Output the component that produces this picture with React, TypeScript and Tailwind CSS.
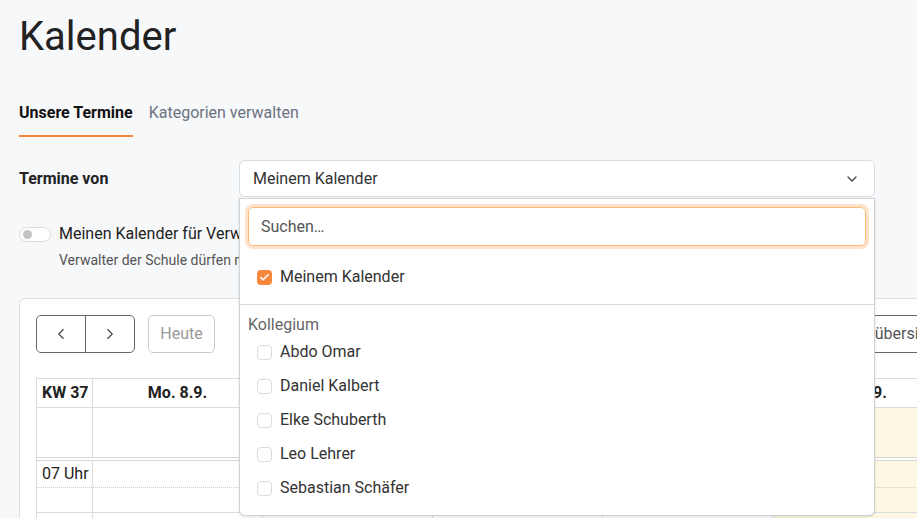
import React from "react";
import { ChevronDown, ChevronLeft, ChevronRight, Check } from "lucide-react";

const colleagues = [
  "Abdo Omar",
  "Daniel Kalbert",
  "Elke Schuberth",
  "Leo Lehrer",
  "Sebastian Schäfer",
];

const days = ["Mo. 8.9.", "Di. 9.9.", "Mi. 10.9.", "Do. 11.9.", "Fr. 12.9."];

const CalendarSelect: React.FC = () => {
  return (
    <div className="relative flex-1">
      <div className="h-[37px] flex items-center justify-between pl-[13px] pr-[14px] bg-white border border-[#d9dce0] rounded-md text-[16px] text-[#333]">
        <span>Meinem Kalender</span>
        <ChevronDown size={16} strokeWidth={2} className="text-[#444]" />
      </div>

      {/* open dropdown */}
      <div className="absolute left-0 right-0 top-[38px] z-10 bg-white border border-[#cfd2d6] rounded-b-md shadow-sm">
        <div className="px-[8px] pt-[8px]">
          <div className="h-[39px] flex items-center px-[12px] border border-[#fdba74] rounded-[5px] ring-[3px] ring-[#fde3cc] text-[16px] text-[#555]">
            Suchen…
          </div>
        </div>

        <div className="pt-[14px] pb-[10px]">
          <div className="h-[34px] flex items-center pl-[17px] gap-[8px]">
            <span className="w-[15px] h-[15px] rounded-[4px] bg-[#f7873b] flex items-center justify-center">
              <Check size={11} strokeWidth={3.5} className="text-white" />
            </span>
            <span className="text-[16px] text-[#333]">Meinem Kalender</span>
          </div>
        </div>

        <div className="border-t border-[#d6d8db] pt-[10px] pb-[10px]">
          <div className="h-[20px] flex items-center pl-[8px] text-[16px] text-[#666]">
            Kollegium
          </div>
          {colleagues.map((name) => (
            <div key={name} className="h-[34px] flex items-center pl-[17px] gap-[8px]">
              <span className="w-[15px] h-[15px] rounded-[4px] border border-[#d9dbde] bg-white" />
              <span className="text-[16px] text-[#333]">{name}</span>
            </div>
          ))}
        </div>
      </div>
    </div>
  );
};

const CalendarCard: React.FC = () => {
  return (
    <div className="mt-[29px] w-[952px] bg-white border border-[#dcdee2] rounded-md px-[16px] pt-[16px]">
      <div className="flex items-center">
        <div className="flex h-[38px] border border-[#666] rounded-[5px]">
          <button className="w-[49px] flex items-center justify-center border-r border-[#666] text-[#444]">
            <ChevronLeft size={18} strokeWidth={1.5} />
          </button>
          <button className="w-[48px] flex items-center justify-center text-[#444]">
            <ChevronRight size={18} strokeWidth={1.5} />
          </button>
        </div>
        <button className="ml-[13px] h-[38px] w-[67px] border border-[#c8cacd] rounded-[5px] text-[16px] text-[#9a9a9a]">
          Heute
        </button>
        <button className="ml-auto h-[38px] px-[12px] border border-[#666] rounded-[5px] text-[16px] text-[#555]">
          Monatsübersicht
        </button>
      </div>

      <div className="mt-[25px] border-l border-t border-[#dcdcdc]">
        {/* header */}
        <div className="flex h-[29px] border-b border-[#dcdcdc]">
          <div className="w-[56px] shrink-0 border-r border-[#dcdcdc] flex items-center pl-[5px] text-[16px] font-bold text-[#222]">
            KW 37
          </div>
          {days.map((d) => (
            <div
              key={d}
              className="w-[170px] shrink-0 border-r border-[#dcdcdc] flex items-center justify-center text-[16px] font-bold text-[#222]"
            >
              {d}
            </div>
          ))}
        </div>

        {/* all-day row */}
        <div className="flex h-[53px] border-b-[4px] border-double border-[#d4d4d4]">
          <div className="w-[56px] shrink-0 border-r border-[#dcdcdc]" />
          {days.map((d, i) => (
            <div
              key={d}
              className={
                i === 4
                  ? "w-[170px] shrink-0 border-r border-[#dcdcdc] bg-[#fef8e2]"
                  : "w-[170px] shrink-0 border-r border-[#dcdcdc]"
              }
            />
          ))}
        </div>

        {/* hour rows */}
        {["07 Uhr", "08 Uhr"].map((h) => (
          <div key={h} className="flex h-[52px] border-b border-[#dcdcdc]">
            <div className="w-[56px] shrink-0 border-r border-[#dcdcdc] flex flex-col">
              <div className="h-[27px] flex items-center pl-[5px] text-[16px] text-[#222] border-b border-dotted border-[#cfcfcf]">
                {h}
              </div>
            </div>
            {days.map((d, i) => (
              <div
                key={d}
                className={
                  i === 4
                    ? "w-[170px] shrink-0 border-r border-[#dcdcdc] bg-[#fef8e2]"
                    : "w-[170px] shrink-0 border-r border-[#dcdcdc]"
                }
              >
                <div className="h-[27px] border-b border-dotted border-[#cfcfcf]" />
              </div>
            ))}
          </div>
        ))}
      </div>
    </div>
  );
};

export default function App() {
  return (
    <div className="h-[518px] w-full overflow-hidden bg-[#f7f8fa] font-['Roboto',sans-serif] pl-[19px]">
      <h1 className="pt-[13px] text-[40px] leading-[48px] text-[#222]">Kalender</h1>

      <div className="mt-[43px] flex items-end gap-[16px]">
        <div className="pb-[13px] border-b-2 border-[#f7873b] text-[16px] leading-[18px] font-bold text-[#111]">
          Unsere Termine
        </div>
        <div className="pb-[15px] text-[16px] leading-[18px] text-[#6b7280]">
          Kategorien verwalten
        </div>
      </div>

      <div className="mt-[23px] flex items-center w-[856px]">
        <div className="w-[220px] shrink-0 text-[16px] font-bold text-[#222]">Termine von</div>
        <CalendarSelect />
      </div>

      <div className="mt-[27px] flex items-center h-[20px] gap-[8px]">
        <span className="w-[32px] h-[15px] rounded-full border border-[#dcdcdc] bg-white flex items-center pl-[3px]">
          <span className="w-[9px] h-[9px] rounded-full bg-[#c4c4c4]" />
        </span>
        <span className="text-[16px] text-[#222]">Meinen Kalender für Verwalter freigeben</span>
      </div>
      <div className="mt-[8px] pl-[40px] text-[14px] leading-[17px] text-[#555]">
        Verwalter der Schule dürfen meinen Kalender einsehen
      </div>

      <CalendarCard />
    </div>
  );
}
